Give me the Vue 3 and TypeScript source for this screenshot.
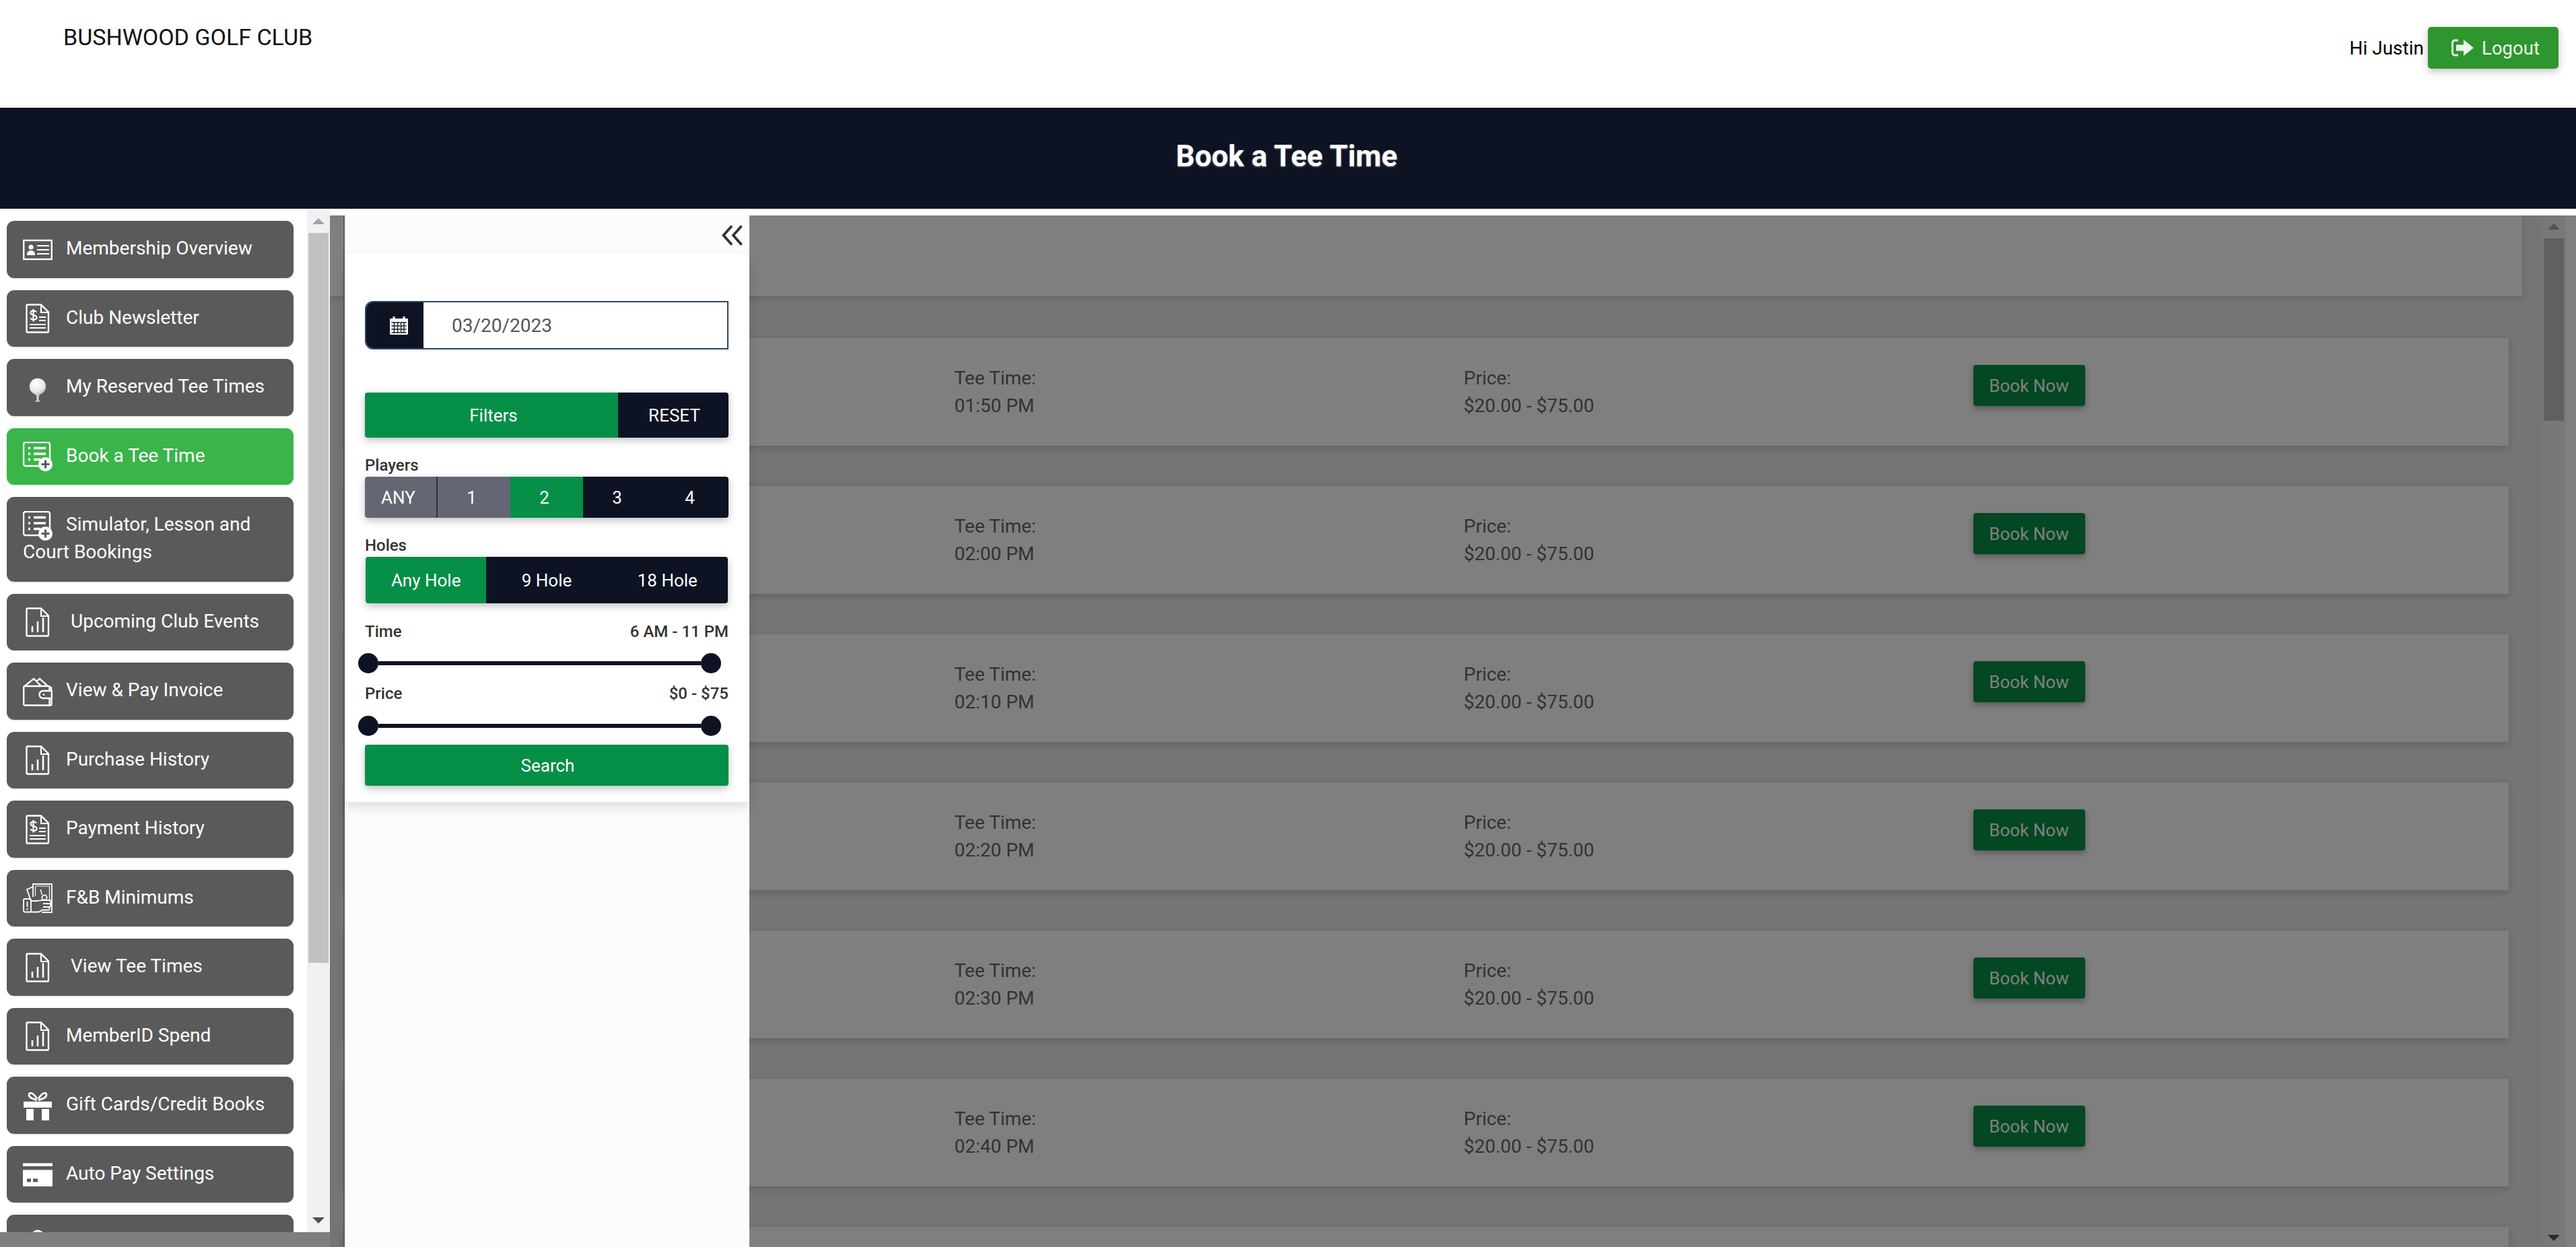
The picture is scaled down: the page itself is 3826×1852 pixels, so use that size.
<script setup lang="ts">
import { ref } from 'vue'

type NavItem = { label: string; icon: string; active?: boolean; nudge?: boolean }

const navItems: NavItem[] = [
  { label: 'Membership Overview', icon: 'i-card' },
  { label: 'Club Newsletter', icon: 'i-dollar-doc' },
  { label: 'My Reserved Tee Times', icon: 'i-ball' },
  { label: 'Book a Tee Time', icon: 'i-list-add', active: true },
  { label: 'Simulator, Lesson and Court Bookings', icon: 'i-list-add' },
  { label: 'Upcoming Club Events', icon: 'i-bars-doc', nudge: true },
  { label: 'View & Pay Invoice', icon: 'i-wallet' },
  { label: 'Purchase History', icon: 'i-bars-doc' },
  { label: 'Payment History', icon: 'i-dollar-doc' },
  { label: 'F&B Minimums', icon: 'i-cash' },
  { label: 'View Tee Times', icon: 'i-bars-doc', nudge: true },
  { label: 'MemberID Spend', icon: 'i-bars-doc' },
  { label: 'Gift Cards/Credit Books', icon: 'i-gift' },
  { label: 'Auto Pay Settings', icon: 'i-credit' },
  { label: '', icon: 'i-lock' }
]

const teeTimes = ['01:50 PM', '02:00 PM', '02:10 PM', '02:20 PM', '02:30 PM', '02:40 PM']

const players = ['ANY', '1', '2', '3', '4']
const holes = ['Any Hole', '9 Hole', '18 Hole']
const selectedPlayers = ref('2')
const selectedHoles = ref('Any Hole')
const date = ref('03/20/2023')
</script>

<template>
  <div class="page">
    <svg class="sprite" width="0" height="0" aria-hidden="true">
      <defs>
        <radialGradient id="ball-shade" cx="0.4" cy="0.35" r="0.75">
          <stop offset="0" stop-color="#ffffff" />
          <stop offset="0.65" stop-color="#e6e6e6" />
          <stop offset="1" stop-color="#a9a9a9" />
        </radialGradient>
        <symbol id="i-card" viewBox="0 0 44 44">
          <rect x="1.200" y="8" width="41.600" height="28" fill="none" stroke="currentColor" stroke-width="2.400" />
          <circle cx="12" cy="18" r="3.600" fill="currentColor" />
          <path d="M6 30c0-5 2-7 6-7s6 2 6 7z" fill="currentColor" />
          <path d="M21 16h18M21 22h18M21 28h18" stroke="currentColor" stroke-width="1.800" fill="none" />
        </symbol>
        <symbol id="i-dollar-doc" viewBox="0 0 44 44">
          <path d="M7 1.500h20l11 11V41a1.500 1.500 0 0 1-1.500 1.500H7A1.500 1.500 0 0 1 5.500 41V3A1.500 1.500 0 0 1 7 1.500z" fill="none" stroke="currentColor" stroke-width="2.400" />
          <path d="M27 2v11h11" fill="none" stroke="currentColor" stroke-width="2.200" />
          <path d="M20 12.500c-1-1.500-2.500-2-4.500-2-2.500 0-4 1.300-4 3.200 0 4.300 9 2.300 9 6.800 0 2-1.800 3.300-4.500 3.300-2.200 0-3.800-.8-4.800-2.300M15.500 8v18.500" fill="none" stroke="currentColor" stroke-width="2.200" />
          <path d="M24 20h10M24 25h10M10 31h24M10 36h24" fill="none" stroke="currentColor" stroke-width="2.200" />
        </symbol>
        <symbol id="i-ball" viewBox="0 0 44 44">
          <path d="M16 29l4.500 5v7h-2v1.500h7V41h-2v-7l4.500-5z" fill="#d9d9d9" />
          <circle cx="22" cy="20" r="12.200" fill="url(#ball-shade)" />
        </symbol>
        <symbol id="i-list-add" viewBox="0 0 44 44">
          <path d="M29 36H4a3 3 0 0 1-3-3V4a3 3 0 0 1 3-3h33a3 3 0 0 1 3 3v24" fill="none" stroke="currentColor" stroke-width="2.400" />
          <path d="M8 9.500h3M8 18h3M8 26.500h3" stroke="currentColor" stroke-width="3.400" fill="none" />
          <path d="M16 9.500h18M16 18h18M16 26.500h10" stroke="currentColor" stroke-width="3.400" fill="none" />
          <circle cx="33.500" cy="33.500" r="10.500" fill="currentColor" />
          <path d="M33.500 27.500v12M27.500 33.500h12" stroke="#5a5a5a" stroke-width="3" class="plus" />
        </symbol>
        <symbol id="i-bars-doc" viewBox="0 0 44 44">
          <path d="M7 1.500h20l11 11V41a1.500 1.500 0 0 1-1.500 1.500H7A1.500 1.500 0 0 1 5.500 41V3A1.500 1.500 0 0 1 7 1.500z" fill="none" stroke="currentColor" stroke-width="2.400" />
          <path d="M27 2v11h11" fill="none" stroke="currentColor" stroke-width="2.200" />
          <path d="M14 37V28M22 37V21M30 37V15" fill="none" stroke="currentColor" stroke-width="2.600" />
        </symbol>
        <symbol id="i-wallet" viewBox="0 0 44 44">
          <path d="M3 14h35a1.500 1.500 0 0 1 1.500 1.500V20M39.500 32v9a1.500 1.500 0 0 1-1.500 1.500H2.500A1.500 1.500 0 0 1 1.200 41V15l15-12 11 11M20 7l5-4 12 11" fill="none" stroke="currentColor" stroke-width="2.400" />
          <path d="M42.800 21H30a5.500 5.500 0 0 0 0 11h12.800z" fill="none" stroke="currentColor" stroke-width="2.400" />
          <path d="M39 15l3 1v5M42.500 32v9a1.500 1.500 0 0 1-1.500 1.500H38" fill="none" stroke="currentColor" stroke-width="2.400" />
          <circle cx="31" cy="26.500" r="1.500" fill="currentColor" />
        </symbol>
        <symbol id="i-cash" viewBox="0 0 44 44">
          <path d="M15 20V1h28v42H28" fill="none" stroke="currentColor" stroke-width="1.800" />
          <path d="M18.500 4h21v23M18.500 4v15" fill="none" stroke="currentColor" stroke-width="1.200" />
          <path d="M15 5L6 9l6 17" fill="none" stroke="currentColor" stroke-width="1.800" />
          <circle cx="32" cy="21" r="3.600" fill="none" stroke="currentColor" stroke-width="1.800" />
          <path d="M26 9c2 3 2 5 2 8" fill="none" stroke="currentColor" stroke-width="1.500" />
          <rect x="1" y="23" width="11" height="19.500" rx="2" fill="none" stroke="currentColor" stroke-width="1.800" />
          <path d="M6.500 27v8M6.500 37v2.500" fill="none" stroke="currentColor" stroke-width="1.800" />
          <path d="M12 26h9c3 0 4-1 7-1h11a2.500 2.500 0 0 1 0 5H30M39 30a2.500 2.500 0 0 1 0 5H30M38 35a2.300 2.300 0 0 1 0 4.500H28c-2 3-4 3-6 3H12" fill="#5a5a5a" stroke="currentColor" stroke-width="1.800" class="cash-hand" />
        </symbol>
        <symbol id="i-gift" viewBox="0 0 44 44">
          <path d="M1 16h42v9H1zM5 27h11v17H5zM28 27h11v17H28z" fill="currentColor" />
          <path d="M21 14C16 12 9 11 9 6 9 1 16 3 21 12M23 14c5-2 12-3 12-8 0-5-7-3-12 6" fill="none" stroke="currentColor" stroke-width="2.800" />
        </symbol>
        <symbol id="i-credit" viewBox="0 0 44 44">
          <path d="M0 5.500h44V10H0zM0 15.500h44V40H0z" fill="currentColor" />
          <path d="M6 28.500h6v5H6zM15 28.500h7v5h-7z" fill="#5a5a5a" />
        </symbol>
        <symbol id="i-lock" viewBox="0 0 44 44">
          <path d="M14 18v-7a8 8 0 0 1 16 0v7" fill="none" stroke="currentColor" stroke-width="3" />
          <rect x="8" y="18" width="28" height="22" fill="currentColor" />
        </symbol>
      </defs>
    </svg>

    <header class="topbar">
      <div class="brand">BUSHWOOD GOLF CLUB</div>
      <div class="user">
        <span class="hello">Hi Justin</span>
        <button class="logout" type="button">
          <svg class="logout-icon" viewBox="0 0 33 26" width="33" height="26">
            <path d="M10 2H5a3.500 3.500 0 0 0-3.500 3.500v15A3.500 3.500 0 0 0 5 24h5" fill="none" stroke="currentColor" stroke-width="2.800" />
            <path d="M7 8.500h11V1l15 12-15 12v-7.500H7z" fill="currentColor" />
          </svg>
          Logout
        </button>
      </div>
    </header>

    <div class="titlebar">
      <h1>Book a Tee Time</h1>
    </div>

    <main class="main">
      <aside class="sidebar">
        <nav class="nav">
          <a v-for="item in navItems" :key="item.icon + item.label" class="nav-item" :class="{ active: item.active, nudge: item.nudge }">
            <svg class="nav-icon"><use :href="'#' + item.icon" /></svg>{{ item.label }}
          </a>
        </nav>
        <div class="scrollbar side-scroll">
          <span class="arrow up"></span>
          <span class="thumb"></span>
          <span class="arrow down"></span>
        </div>
      </aside>

      <section class="content">
        <div class="content-body">
          <div class="summary"></div>
          <article v-for="time in teeTimes" :key="time" class="tee-card">
            <div></div>
            <div class="cell">
              <div>Tee Time:</div>
              <div>{{ time }}</div>
            </div>
            <div class="cell">
              <div>Price:</div>
              <div>$20.00 - $75.00</div>
            </div>
            <div><button class="book" type="button">Book Now</button></div>
          </article>
          <article class="tee-card"></article>
        </div>
        <div class="scrollbar content-scroll">
          <span class="arrow up"></span>
          <span class="thumb"></span>
          <span class="arrow down"></span>
        </div>
      </section>

      <div class="overlay"></div>

      <aside class="drawer">
        <div class="drawer-top">
          <svg viewBox="0 0 31 31" width="31" height="31">
            <path d="M15 1.500L2.500 15.500l12.500 14M29.500 1.500l-12.500 14 12.500 14" fill="none" stroke="#333" stroke-width="3.800" />
          </svg>
        </div>
        <div class="filters">
          <div class="date-field">
            <span class="date-icon">
              <svg viewBox="0 0 27 28" width="27" height="28">
                <path d="M1 4h25a1 1 0 0 1 1 1v22a1 1 0 0 1-1 1H1a1 1 0 0 1-1-1V5a1 1 0 0 1 1-1z" fill="#fff" />
                <path d="M6 1v6M21 1v6" stroke="#fff" stroke-width="3" />
                <path d="M2.500 10h22M2.500 15h22M2.500 20h22M2.500 25h22" stroke="#0d1323" stroke-width="1.300" stroke-dasharray="3.500 1.200" />
                <path d="M6.500 9v17M11.500 9v17M16.500 9v17M21 9v17" stroke="#0d1323" stroke-width="1.300" />
              </svg>
            </span>
            <input v-model="date" class="date-input" type="text" />
          </div>

          <div class="filter-head">
            <button class="green grow" type="button">Filters</button>
            <button class="navy reset" type="button">RESET</button>
          </div>

          <div class="label first">Players</div>
          <div class="seg players">
            <button
              v-for="p in players"
              :key="p"
              type="button"
              :class="p === selectedPlayers ? 'green' : p === 'ANY' || p === '1' ? 'muted' : 'navy'"
              @click="selectedPlayers = p"
            >{{ p }}</button>
          </div>

          <div class="label">Holes</div>
          <div class="seg holes">
            <button
              v-for="h in holes"
              :key="h"
              type="button"
              :class="h === selectedHoles ? 'green' : 'navy'"
              @click="selectedHoles = h"
            >{{ h }}</button>
          </div>

          <div class="label spread time-label"><span>Time</span><span>6 AM - 11 PM</span></div>
          <div class="slider time-slider"><span class="knob"></span><span class="track"></span><span class="knob"></span></div>

          <div class="label spread price-label"><span>Price</span><span>$0 - $75</span></div>
          <div class="slider price-slider"><span class="knob"></span><span class="track"></span><span class="knob"></span></div>

          <button class="green search" type="button">Search</button>
        </div>
      </aside>
    </main>
  </div>
</template>

<style>
html,
body {
  margin: 0;
  background: #fff;
  overflow: hidden;
}
</style>

<style scoped>
.page {
  width: 3826px;
  height: 1852px;
  overflow: hidden;
  font-family: Roboto, "Liberation Sans", sans-serif;
  color: #000;
  background: #fff;
}

.sprite {
  position: absolute;
}

.topbar {
  height: 160px;
  box-sizing: border-box;
  padding: 36px 26px 0 94px;
  display: flex;
  justify-content: space-between;
  align-items: flex-start;
}

.brand {
  font-size: 34px;
  line-height: 38px;
  color: #111;
}

.user {
  display: flex;
  align-items: center;
  gap: 6px;
  margin-top: 4px;
}

.hello {
  font-size: 28px;
}

.logout {
  width: 194px;
  height: 62px;
  display: flex;
  align-items: center;
  justify-content: center;
  gap: 12px;
  padding: 0 0 0 7px;
  border: none;
  border-radius: 5px;
  background: #2e962e;
  color: #eef8ee;
  font: 400 27.500px Roboto, sans-serif;
  box-shadow: 0 4px 12px rgba(0, 0, 0, 0.25);
}

.titlebar {
  height: 150px;
  box-sizing: border-box;
  padding: 0 4px 6px 0;
  background: #0d1323;
  display: flex;
  align-items: center;
  justify-content: center;
}

.titlebar h1 {
  margin: 0;
  font-size: 44px;
  font-weight: 700;
  color: #fff;
  text-shadow: 0 1px 3px rgba(255, 255, 255, 0.35);
}

.main {
  position: relative;
  display: flex;
  height: 1542px;
  overflow: hidden;
}

.sidebar {
  position: relative;
  z-index: 2;
  width: 490px;
  height: 1518px;
  margin-top: 2px;
  flex: none;
  display: flex;
  background: #fff;
  overflow: hidden;
}

.nav {
  width: 456px;
  padding: 16px 0 0 10px;
  box-sizing: border-box;
}

.nav-item {
  display: block;
  width: 426px;
  min-height: 84.500px;
  box-sizing: border-box;
  padding: 20px 10px 23.500px 24px;
  margin-bottom: 18px;
  border-radius: 11px;
  background: #5a5a5a;
  box-shadow: 0 2px 0 #ececec;
  color: #fff;
  font-size: 28px;
  line-height: 41px;
}

.nav-item.active {
  background: #3ab54a;
  box-shadow: 0 2px 0 #e2f4e4;
}

.nav-icon {
  width: 44px;
  height: 44px;
  margin: -4px 20px -4px 0;
  vertical-align: middle;
  color: #fff;
}

.nav-item.nudge .nav-icon {
  margin-right: 27px;
}

.scrollbar {
  display: flex;
  flex-direction: column;
  align-items: center;
  width: 34px;
  background: #f1f1f1;
}

.side-scroll {
  height: 100%;
  flex: none;
}

.arrow {
  width: 0;
  height: 0;
  flex: none;
  border-left: 9px solid transparent;
  border-right: 9px solid transparent;
}

.arrow.up {
  margin: 12px 0 13px;
  border-bottom: 9px solid #a3a3a3;
}

.arrow.down {
  margin: auto 0 13px;
  border-top: 9px solid #505050;
}

.thumb {
  width: 30px;
  height: 1084px;
  background: #c1c1c1;
  flex: none;
}

.content {
  flex: 1;
  min-width: 0;
  margin-top: 10px;
  height: 1532px;
  display: flex;
  background: #fff;
}

.content-body {
  flex: 1;
  min-width: 0;
  overflow: hidden;
  background: #ebebeb;
}

.summary {
  height: 120px;
  margin: 0 30px 62px 0;
  background: #fff;
  box-shadow: 0 3px 10px rgba(0, 0, 0, 0.16);
}

.tee-card {
  height: 160px;
  box-sizing: border-box;
  margin: 0 50px 60px 20px;
  padding: 40px 0 0 151px;
  display: grid;
  grid-template-columns: repeat(4, 756.500px);
  background: #fff;
  box-shadow: 0 3px 12px rgba(0, 0, 0, 0.18);
}

.cell {
  font-size: 28px;
  line-height: 40.500px;
  color: #666;
}

.book {
  width: 166px;
  height: 61px;
  border: none;
  border-radius: 4px;
  background: #068f47;
  color: #fff;
  font: 400 26px Roboto, sans-serif;
  box-shadow: 0 4px 10px rgba(0, 0, 0, 0.3);
}

.content-scroll {
  flex: none;
  margin-right: 16px;
}

.content-scroll .thumb {
  height: 271px;
}

.content-scroll .arrow.down {
  margin-bottom: 9px;
}

.overlay {
  position: absolute;
  inset: 10px 0 0 0;
  z-index: 1;
  background: rgba(0, 0, 0, 0.5);
}

.drawer {
  position: absolute;
  top: 10px;
  bottom: 0;
  left: 510px;
  z-index: 2;
  width: 603px;
  box-sizing: border-box;
  border-left: 2px solid #595959;
  background: #fcfcfc;
}

.drawer-top {
  height: 57px;
  box-sizing: border-box;
  padding: 14px 10px 0 0;
  display: flex;
  justify-content: flex-end;
  background: #fcfcfc;
}

.filters {
  padding: 70px 31px 24px 30px;
  background: #fff;
  box-shadow: 0 8px 16px rgba(0, 0, 0, 0.12);
}

.date-field {
  display: flex;
  height: 72px;
  box-sizing: border-box;
  border: 2px solid #2f4565;
  border-radius: 12px 0 0 12px;
  overflow: hidden;
}

.date-icon {
  width: 85px;
  flex: none;
  background: #0d1323;
  display: flex;
  align-items: center;
  justify-content: center;
  padding-left: 12px;
  box-sizing: border-box;
}

.date-input {
  flex: 1;
  min-width: 0;
  border: none;
  outline: none;
  padding: 0 0 0 42px;
  font: 400 28px Roboto, sans-serif;
  color: #555;
  background: #fff;
}

button {
  cursor: pointer;
}

.filter-head {
  display: flex;
  height: 67px;
  margin-top: 64px;
  border-radius: 4px;
  overflow: hidden;
  box-shadow: 0 4px 12px rgba(0, 0, 0, 0.25);
}

.filter-head button,
.seg button,
.search {
  border: none;
  color: #fff;
  font: 400 26px Roboto, sans-serif;
  padding: 0;
}

.filter-head .grow {
  flex: 1;
  padding-left: 6px;
}

.filter-head .reset {
  width: 164px;
  padding-left: 3px;
}

.green {
  background: #068f47;
}

.navy {
  background: #0d1323;
}

.muted {
  background: #636773;
}

.label {
  margin: 27px 0 3px;
  font-size: 24px;
  font-weight: 500;
  line-height: 28px;
  color: #333;
}

.spread {
  display: flex;
  justify-content: space-between;
  margin-bottom: 0;
}

.time-label {
  margin-top: 28px;
}

.price-label {
  margin-top: 16px;
}

.seg {
  display: flex;
  border-radius: 4px;
  overflow: hidden;
  box-shadow: 0 4px 12px rgba(0, 0, 0, 0.25);
}

.seg button {
  flex: 1;
}

.players {
  height: 61px;
}

.seg.players button {
  flex: 1 1 108px;
  box-sizing: border-box;
  padding-right: 7px;
}

.players button:first-child {
  border-right: 2px solid #2b3040;
}

.holes {
  height: 69px;
  margin: 0 1px;
}

.slider {
  display: flex;
  align-items: center;
  width: 539px;
  margin-left: -10px;
}

.time-slider {
  margin-top: 18px;
}

.price-slider {
  margin-top: 19px;
}

.knob {
  width: 30px;
  height: 30px;
  flex: none;
  border-radius: 50%;
  background: #0d1323;
}

.track {
  flex: 1;
  height: 6px;
  background: #0d1323;
}

.search {
  display: block;
  width: 100%;
  height: 61px;
  margin-top: 13px;
  padding-left: 3px;
  border-radius: 4px;
  box-shadow: 0 4px 12px rgba(0, 0, 0, 0.25);
}
</style>
